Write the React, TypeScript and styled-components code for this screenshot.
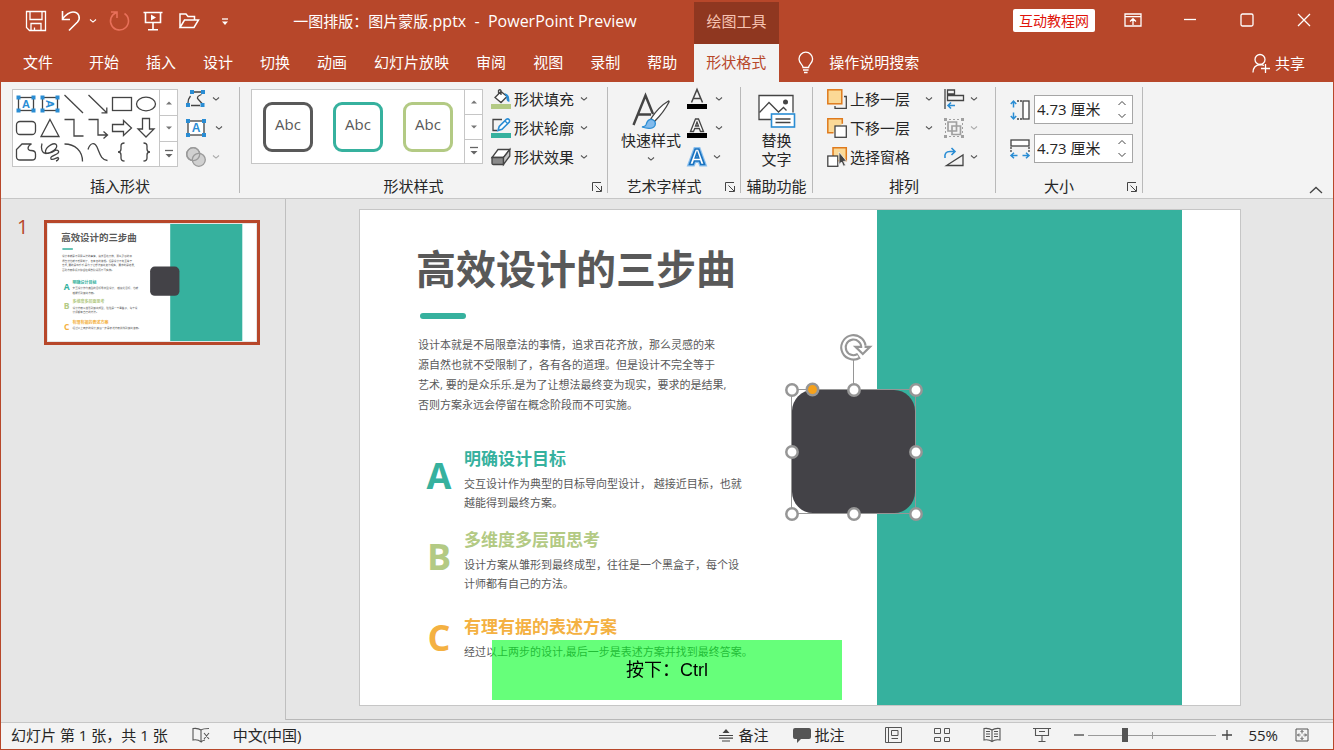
import React from "react";
import styled, { createGlobalStyle, css } from "styled-components";

const color = {
  brand: "#b7472a",
  brandDark: "#8f3720",
  ribbon: "#f3f3f3",
  workspace: "#e6e6e6",
  line: "#c6c6c6",
  ink: "#262626",
  icon: "#444444",
  slideText: "#595959",
  teal: "#36b19e",
  green: "#b3ca84",
  amber: "#f4b142",
  blue: "#2a8dd4",
  shape: "#434247",
  handle: "#969696",
};

const uiFont = `"Open Sans", "Noto Sans CJK SC", sans-serif`;

const GlobalStyle = createGlobalStyle`
  *, *::before, *::after { box-sizing: border-box; }
  body {
    margin: 0;
    font: 15px/20px ${uiFont};
    color: ${color.ink};
    background: ${color.workspace};
  }
  button, input { font: inherit; color: inherit; }
  svg { display: block; flex: none; overflow: visible; }
`;

/* ---------- shell ---------- */

const Window = styled.div`
  display: flex;
  flex-direction: column;
  min-height: 100vh;
  overflow: hidden;
`;

const Header = styled.header`
  background: ${color.brand};
  color: #fff;
`;

const Body = styled.div`
  flex: 1;
  display: flex;
  flex-direction: column;
  border: solid ${color.brand};
  border-width: 0 1px 1px;
`;

const plainButton = css`
  display: flex;
  align-items: center;
  justify-content: center;
  padding: 0;
  border: 0;
  background: none;
  white-space: nowrap;
`;

const TitleRow = styled.div`
  display: flex;
  height: 44px;
  padding-top: 2px;
`;

const QuickAccess = styled.div`
  display: flex;
  align-items: center;
  width: 240px;
  height: 38px;
  padding-left: 25px;
`;

const QuickButton = styled.button<{ $w: number; $gap?: number }>`
  ${plainButton}
  width: ${(p) => p.$w}px;
  height: 28px;
  margin-right: ${(p) => p.$gap ?? 0}px;
`;

const DocTitle = styled.h1`
  width: 454px;
  padding-right: 4px;
  margin: 0;
  font-size: 15px;
  font-weight: 400;
  line-height: 38px;
  text-align: center;
  white-space: pre;
`;

const AppName = styled.span`
  font-size: 16px;
`;

const ContextLabel = styled.div`
  width: 85px;
  background: ${color.brandDark};
  color: #f7c3b2;
  line-height: 38px;
  text-align: center;
`;

const WindowControls = styled.div`
  flex: 1;
  display: flex;
  justify-content: flex-end;
  align-items: center;
  height: 36px;
  padding-right: 2px;
`;

const SiteBadge = styled.a`
  margin-right: 9px;
  padding: 0 6px;
  border-radius: 2px;
  background: #fff;
  color: #e0140a;
  font-size: 14px;
  line-height: 23px;
  text-decoration: none;
`;

const ControlButton = styled.button`
  ${plainButton}
  width: 57px;
  height: 36px;
`;

const TabRow = styled.nav`
  display: flex;
  height: 38px;
  padding-left: 8px;
`;

const Tab = styled.button<{ $active?: boolean; $first?: boolean }>`
  ${plainButton}
  padding: 0 12px 2px 15px;
  ${(p) => p.$first && `margin-right: 9px;`}
  ${(p) =>
    p.$active &&
    `
    margin-left: 5px;
    padding: 0 13px 2px 12px;
    background: ${color.ribbon};
    color: ${color.brand};
  `}
`;

const TellMe = styled.button`
  ${plainButton}
  gap: 14px;
  margin-left: 18px;
  padding-bottom: 2px;
`;

const Share = styled.button`
  ${plainButton}
  gap: 5px;
  margin: 0 29px 0 auto;
`;

/* ---------- ribbon ---------- */

const Ribbon = styled.section`
  display: flex;
  height: 117px;
  padding: 5px 0;
  background: ${color.ribbon};
  border-bottom: 1px solid ${color.line};
`;

const Group = styled.section<{ $w: number }>`
  display: flex;
  flex-direction: column;
  width: ${(p) => p.$w}px;
  border-right: 1px solid #b9b9b9;
`;

const GroupBody = styled.div<{ $pad?: number }>`
  flex: 1;
  display: flex;
  align-items: flex-start;
  padding-left: ${(p) => p.$pad ?? 0}px;
`;

const GroupFooter = styled.footer`
  display: flex;
  align-items: center;
  height: 20px;
  margin-bottom: -3px;
`;

const GroupName = styled.span`
  flex: 1;
  text-align: center;
  white-space: nowrap;
`;

const Launcher = styled.button`
  ${plainButton}
  width: 20px;
  height: 20px;
  padding-top: 2px;
`;

const Gallery = styled.div<{ $h: number }>`
  display: flex;
  height: ${(p) => p.$h}px;
  margin-top: 2px;
  border: 1px solid ${color.line};
  background: #fff;
`;

const ShapeGrid = styled.div`
  display: grid;
  grid-template-columns: repeat(6, 24px);
  grid-auto-rows: 24px;
  padding: 2px 1px;
`;

const ShapeButton = styled.button`
  ${plainButton}
`;

const StyleList = styled.div`
  display: flex;
  align-items: center;
  gap: 20px;
  padding: 0 11px;
`;

const StyleSwatch = styled.button<{ $c: string }>`
  ${plainButton}
  width: 50px;
  height: 50px;
  padding-bottom: 5px;
  border: 3px solid ${(p) => p.$c};
  border-radius: 9px;
  color: ${color.slideText};
  background: #fff;
`;

const Scroller = styled.div`
  display: grid;
  grid-template-rows: repeat(3, 1fr);
  width: 18px;
  border-left: 1px solid ${color.line};
`;

const ScrollButton = styled.button`
  ${plainButton}
  & + & {
    border-top: 1px solid ${color.line};
  }
`;

const CommandColumn = styled.div<{ $left?: number }>`
  display: flex;
  flex-direction: column;
  align-items: flex-start;
  margin-left: ${(p) => p.$left ?? 0}px;
  margin-top: -3px;
`;

const Command = styled.button<{ $gap?: number; $w?: number }>`
  ${plainButton}
  justify-content: flex-start;
  gap: ${(p) => p.$gap ?? 3}px;
  height: 29px;
  ${(p) => p.$w && `width: ${p.$w}px;`}
  & > svg:last-child:not(:first-child) {
    margin-left: auto;
  }
`;

const BigCommand = styled.button<{ $w: number }>`
  ${plainButton}
  flex-direction: column;
  width: ${(p) => p.$w}px;
  padding-top: 6px;
  line-height: 19px;
  & > svg:last-child {
    margin-top: 6px;
  }
`;

const SizeFields = styled.div`
  display: flex;
  flex-direction: column;
  gap: 10px;
  padding-top: 8px;
`;

const SizeField = styled.label`
  display: flex;
  align-items: center;
  gap: 4px;
`;

const Stepper = styled.span`
  display: flex;
  width: 99px;
  height: 29px;
  border: 1px solid #a6a6a6;
  background: #fff;
`;

const StepperInput = styled.input`
  flex: 1;
  min-width: 0;
  padding: 0 0 2px 2px;
  border: 0;
  outline: 0;
  background: none;
`;

const StepperButtons = styled.span`
  display: grid;
  width: 21px;
  padding: 1px 0;
`;

const StepButton = styled.button`
  ${plainButton}
`;

const CollapseButton = styled.button`
  ${plainButton}
  align-self: flex-end;
  width: 30px;
  height: 16px;
  margin-left: auto;
  margin-right: 2px;
  margin-bottom: -5px;
`;

/* ---------- workspace ---------- */

const Workspace = styled.main`
  flex: 1;
  display: flex;
  padding-bottom: 2px;
  background: ${color.workspace};
`;

const SlidePanel = styled.aside`
  display: flex;
  align-items: flex-start;
  width: 285px;
  padding: 21px 0 0 16px;
  border-right: 1px solid #bfbfbf;
`;

const SlideNumber = styled.span`
  width: 27px;
  color: ${color.brand};
  font-size: 20px;
  line-height: 14px;
`;

const ThumbButton = styled.button`
  ${plainButton}
  width: 216px;
  height: 125px;
  border: 3px solid ${color.brand};
  background: ${color.workspace};
`;

const Stage = styled.div`
  flex: 1;
  display: flex;
  justify-content: center;
  align-items: flex-start;
  padding: 10px 19px 13px 0;
  border-bottom: 1px solid #b8b8b8;
`;

const Slide = styled.article`
  position: relative;
  flex: none;
  width: 882px;
  height: 497px;
  padding: 35px 0 0 56px;
  border: 1px solid ${color.line};
  background: #fff;
  color: ${color.slideText};
`;

const SlideTitle = styled.h2`
  margin: 0;
  font-size: 40px;
  line-height: 48px;
  font-weight: 700;
  white-space: nowrap;
`;

const Accent = styled.div`
  width: 46px;
  height: 6px;
  margin: 20px 0 16px 4px;
  border-radius: 3px;
  background: ${color.teal};
`;

const Intro = styled.p`
  margin: 0 0 31px 2px;
  font-size: 11px;
  line-height: 20px;
  white-space: pre-line;
`;

const Points = styled.div`
  display: flex;
  flex-direction: column;
  gap: 15px;
`;

const Point = styled.section<{ $h: number }>`
  display: grid;
  grid-template-columns: 48px 1fr;
  align-items: center;
  height: ${(p) => p.$h}px;
`;

const PointLetter = styled.span<{ $c: string }>`
  align-self: start;
  width: 46px;
  color: ${(p) => p.$c};
  font-size: 36px;
  line-height: 60px;
  font-weight: 700;
  text-align: center;
`;

const PointTitle = styled.h3<{ $c: string }>`
  margin: 0 0 3px;
  color: ${(p) => p.$c};
  font-size: 17px;
  line-height: 24px;
  font-weight: 700;
`;

const PointText = styled.p`
  margin: 0;
  font-size: 11px;
  line-height: 19px;
  white-space: pre-line;
`;

const TealPanel = styled.div`
  position: absolute;
  top: 0;
  bottom: 0;
  left: 517px;
  width: 305px;
  background: ${color.teal};
`;

const Selection = styled.svg`
  position: absolute;
  left: 420px;
  top: 120px;
`;

const KeyHint = styled.div`
  position: fixed;
  left: 50%;
  bottom: 50px;
  width: 350px;
  margin-left: -175px;
  background: rgba(0, 255, 33, 0.6);
  color: #000;
  font: 18px/60px "Liberation Sans", "Noto Sans CJK SC", sans-serif;
  text-align: center;
`;

/* ---------- status bar ---------- */

const StatusBar = styled.footer`
  display: flex;
  align-items: center;
  height: 27px;
  padding: 0 24px 2px 10px;
  border-top: 1px solid ${color.line};
  background: ${color.ribbon};
  white-space: nowrap;
`;

const StatusText = styled.span<{ $left?: number }>`
  margin-left: ${(p) => p.$left ?? 0}px;
`;

const StatusButton = styled.button<{ $left?: number; $gap?: number }>`
  ${plainButton}
  gap: ${(p) => p.$gap ?? 4}px;
  margin-left: ${(p) => p.$left ?? 0}px;
`;

const StatusRight = styled.div`
  display: flex;
  align-items: center;
  margin-left: auto;
`;

const ZoomSlider = styled.input`
  appearance: none;
  width: 128px;
  height: 14px;
  margin: 0 5px 0 3px;
  background:
    linear-gradient(#9a9a9a, #9a9a9a) center / 1px 7px no-repeat,
    linear-gradient(#9a9a9a, #9a9a9a) center / 100% 1px no-repeat;
  &::-webkit-slider-thumb {
    appearance: none;
    width: 6px;
    height: 14px;
    background: #555;
  }
`;

/* ---------- icons ---------- */

type IconProps = { children: React.ReactNode; w?: number; h?: number; c?: string };

const Icon = ({ children, w = 20, h = 20, c = color.icon }: IconProps) => (
  <svg width={w} height={h} viewBox={`0 0 ${w} ${h}`} fill="none" stroke={c} strokeWidth="1.3" aria-hidden="true">
    {children}
  </svg>
);

const Chevron = ({ c = "#555" }: { c?: string }) => (
  <svg width="8" height="6" viewBox="0 0 8 6" fill="none" stroke={c} strokeWidth="1.1" aria-hidden="true">
    <path d="M1 1.500l3 2.600 3-2.600" />
  </svg>
);

const Corners = ({ x1, y1, x2, y2 }: { x1: number; y1: number; x2: number; y2: number }) => (
  <g fill={color.blue} stroke="none">
    {[[x1, y1], [x2, y1], [x1, y2], [x2, y2]].map(([x, y]) => (
      <rect key={`${x}-${y}`} x={x - 2} y={y - 2} width="4" height="4" />
    ))}
  </g>
);

const iconLetter = { fontFamily: "Liberation Sans", fontWeight: 700, textAnchor: "middle" as const, stroke: "none" };

const shapes: [string, React.ReactNode][] = [
  ["文本框", <><rect x="4.500" y="5.500" width="15" height="13" fill="#fff" /><text x="12" y="16" fontSize="11" fill={color.blue} {...iconLetter}>A</text><Corners x1={4.5} y1={5.5} x2={19.5} y2={18.5} /></>],
  ["竖排文本框", <><rect x="4.500" y="5.500" width="15" height="13" fill="#fff" /><text x="12" y="16" fontSize="11" fill={color.blue} transform="rotate(90 12 12)" {...iconLetter}>A</text><Corners x1={4.5} y1={5.5} x2={19.5} y2={18.5} /></>],
  ["直线", <path d="M2.500 3l18.500 18" />],
  ["箭头", <path d="M2.500 3l18 17.500M20.800 15.500v5.300h-5.300" />],
  ["矩形", <rect x="2.500" y="5.500" width="19" height="13" />],
  ["椭圆", <ellipse cx="12" cy="12" rx="9.500" ry="6.800" />],
  ["圆角矩形", <rect x="2.500" y="5.500" width="19" height="13" rx="3.500" />],
  ["三角形", <path d="M12 3.500l9 17H3z" />],
  ["肘形连接符", <path d="M2.500 3.500H12V20h9.500" />],
  ["肘形箭头", <path d="M2.500 3.500H12v15.500h9M17.500 15.500l4 3.500-4 3.500" />],
  ["右箭头", <path d="M2.500 8.500H13.500V4.500L21.500 12l-8 7.500v-4h-11z" />],
  ["下箭头", <path d="M8.500 2.500h7v10.500h4.500l-8 8-8-8h4.500z" />],
  ["任意多边形", <path d="M8 4h9.500c-4.500 2-4.500 6.500-.5 6.500 3 0 4.500 1 4.500 3.500v3c0 2-1.500 3-3.500 3H6c-2 0-3.500-1-3.500-3V9.500z" />],
  ["自由曲线", <path d="M4 3.500c-1.500 5 0 10 4 10 5 0 12-5 10.500-8.500C17 1.500 8.500 6 7.500 11c-.8 4.500 7 1.500 9.500-.5 3-1 5 1 2.500 3-3 2-8 3-6.500 5.500 1.500 1.500 6-1.500 7-1.500 1.500 1 0 3-2 3.500" />],
  ["弧形", <path d="M2.500 4C13 4 20.500 11 20.500 21.500" />],
  ["曲线", <path d="M2 9.500C4 3 8.500 1.500 11 7c3 7 4 13 10.500 13.500" />],
  ["左大括号", <path d="M14.500 3c-3 0-3.500 1-3.500 3v3c0 2-.5 3-3 3 2.500 0 3 1 3 3v3c0 2 .5 3 3.500 3" />],
  ["右大括号", <path d="M9.500 3c3 0 3.500 1 3.500 3v3c0 2 .5 3 3 3-2.500 0-3 1-3 3v3c0 2-.5 3-3.500 3" />],
];

const GalleryScroller = () => (
  <Scroller>
    <ScrollButton aria-label="上一行"><Icon w={8} h={6} c="none"><path d="M1 4.500h6L4 1.500z" fill="#777" /></Icon></ScrollButton>
    <ScrollButton aria-label="下一行"><Icon w={8} h={6} c="none"><path d="M1 1.500h6L4 4.500z" fill="#777" /></Icon></ScrollButton>
    <ScrollButton aria-label="更多"><Icon w={10} h={10} c="#666"><path d="M1 1.500h8" /><path d="M1.500 5h7L5 8.500z" fill="#666" stroke="none" /></Icon></ScrollButton>
  </Scroller>
);

const EditPointsIcon = () => (
  <Icon><path d="M8 3h7M4.500 7Q2 10 2 14M5 16.500h9M15.500 5.500Q11 7 11.500 9.500l4.500 5" /><g fill={color.blue} stroke="none"><rect x="4" y="1" width="4" height="4" /><rect x="15" y="1" width="4" height="4" /><rect x="0" y="14" width="4" height="4" /><rect x="14.500" y="14" width="4" height="4" /></g></Icon>
);
const TextBoxIcon = () => (
  <Icon><rect x="2" y="3" width="16" height="14" fill="#fff" /><text x="10" y="14" fontSize="12" fill={color.blue} {...iconLetter}>A</text><Corners x1={2} y1={3} x2={18} y2={17} /></Icon>
);
const MergeIcon = () => (
  <Icon c="#9a9a9a"><circle cx="7.200" cy="7.200" r="6.500" fill="#d0d0d0" /><circle cx="12.800" cy="12.800" r="6.500" fill="#d0d0d0" /><circle cx="7.200" cy="7.200" r="6.500" /></Icon>
);
const FillIcon = () => (
  <Icon><rect x="0" y="15" width="20" height="5" fill={color.green} stroke="none" /><path d="M10 2.500l6 5-6 6-6-5zM7.500 5V1.500q1.500-1.500 2.500 0V6" fill="#fff" /><path d="M14.500 5q3.500 1 3.300 7-2-.5-1.800-4z" fill={color.blue} stroke={color.blue} /></Icon>
);
const OutlineIcon = () => (
  <Icon><rect x="0" y="15" width="20" height="5" fill={color.teal} stroke="none" /><path d="M11 1.500H2V12.500h4" /><path d="M7 12.500l1.200-4L15.500 1.200q1.500-.8 2.500.3t.3 2.500L11 11.300z" fill="#fff" stroke={color.blue} strokeWidth="1.600" /><path d="M14 3l2.800 2.800" stroke={color.blue} /></Icon>
);
const EffectsIcon = () => (
  <Icon><path d="M7 2.500H18.800L12.500 10.500H1z" fill="#fff" /><path d="M1 10.500h11.500v7H2.500Q1 17.500 1 16z" fill="#8a8a8a" /><path d="M12.500 10.500L18.800 2.500V9L12.500 17.500z" fill="#c4c4c4" /></Icon>
);
const QuickStyleIcon = () => (
  <Icon w={38} h={38}><path d="M1.500 32L13.500 2.500 21 21M6 21.500h13" strokeWidth="2.400" /><path d="M19 25.500q8-12 17.500-17.500.8 0 .5 1-5 10-14.500 19.500z" fill="#fff" /><path d="M10 34q4-.5 4.500-3.500 1.500-4.500 5.500-4 4.500 1.500 3 6-3 5-13 1.500z" fill="#83bbec" stroke={color.blue} /></Icon>
);
const TextFillIcon = () => (
  <Icon><path d="M4.500 13.500L10 .5l5.500 13M6.500 9.500h7" strokeWidth="1.500" /><rect x="0" y="15" width="20" height="5" fill="#000" stroke="none" /></Icon>
);
const TextOutlineIcon = () => (
  <Icon><path d="M3.500 13.500L8.500 1h3l5 12.500h-3l-1.200-3H7.700l-1.200 3zM8.500 8h3L10 4z" fill="#fff" /><rect x="0" y="15" width="20" height="5" fill="#000" stroke="none" /></Icon>
);
const TextEffectIcon = () => (
  <Icon><path d="M2.500 17.500L8.200 2h3.600l5.700 15.500h-3.700l-1.200-3.500H7.400l-1.200 3.500zM8.300 11h3.400L10 6z" fill="#8cc0ee" stroke="#8cc0ee" strokeWidth="4" /><path d="M2.500 17.500L8.200 2h3.600l5.700 15.500h-3.700l-1.200-3.500H7.400l-1.200 3.500zM8.300 11h3.400L10 6z" fill="#fff" stroke="#1a73c0" strokeWidth="1.700" /></Icon>
);
const AltTextIcon = () => (
  <Icon w={40} h={38}><path d="M14 26.500H2V2.500h34v17" fill="#fff" /><path d="M2.500 19.500l9.500-10L21.500 19l5-4.500 3 3" /><circle cx="28.500" cy="9" r="2.500" fill={color.icon} stroke="none" /><rect x="14.500" y="21" width="23" height="13" fill="#fff" stroke={color.blue} strokeWidth="1.600" /><path d="M18.500 26h15M18.500 29.500h15" /></Icon>
);
const ForwardIcon = () => (
  <Icon><path d="M17 7.500h2.300V19.300H8V17" /><rect x=".8" y=".8" width="14" height="14" fill="#fbd996" stroke="#df7a1c" strokeWidth="1.500" /></Icon>
);
const BackwardIcon = () => (
  <Icon><path d="M6.500 14.800H.8V.8h14.500v5" fill="#fbd996" stroke="#df7a1c" strokeWidth="1.500" /><rect x="8" y="8" width="11.300" height="11.300" fill="#fff" /></Icon>
);
const PaneIcon = () => (
  <Icon><path d="M6 .8h13.300v13H6z" fill="#fbd996" stroke="#df7a1c" strokeWidth="1.500" /><rect x=".8" y="9" width="10" height="10.300" fill="#fff" /><path d="M12 5v12.500l2.500-2.500 2 4.300 2-1-2-4h3.200z" fill={color.icon} stroke="#f3f3f3" strokeWidth=".8" /></Icon>
);
const AlignIcon = () => (
  <Icon><path d="M1 0v20M3.500 1h7v4h-7zM3.500 6.500h16v5h-16z" /><path d="M11 16.500H4M7 13.500l-3 3 3 3" stroke={color.blue} strokeWidth="1.600" /></Icon>
);
const GroupIcon = () => (
  <Icon c="#a0a0a0"><path d="M4 4h8.500v9H4zM8 8h8.500v8.500H8z" strokeWidth="1.700" /><g fill="#a0a0a0" stroke="none"><rect width="3" height="3" /><rect x="17" width="3" height="3" /><rect y="17" width="3" height="3" /><rect x="17" y="17" width="3" height="3" /></g><path d="M5 1.500h10M5 18.500h10M1.500 5v10M18.500 5v10" strokeWidth="1" strokeDasharray="2 2" /></Icon>
);
const RotateIcon = () => (
  <Icon><path d="M1 11Q0 4.500 6 4.500h4.500M7.500 1L11 4.500 7.500 8" stroke={color.blue} strokeWidth="1.600" /><path d="M2.500 18.500H19V8z" /></Icon>
);
const HeightIcon = () => (
  <Icon><path d="M3.500 1.500v6M.8 4l2.700-3 2.700 3M3.500 18.500v-6M.8 16l2.700 3 2.700-3" stroke={color.blue} strokeWidth="1.500" /><path d="M7 1h5M7 19h5" strokeDasharray="2 1" /><rect x="13" y="1" width="6" height="18" fill="#fff" /></Icon>
);
const WidthIcon = () => (
  <Icon><rect x="1" y="1" width="18" height="6" fill="#fff" /><path d="M1 8v5M19 8v5" strokeDasharray="2 1" /><path d="M1.500 16.500h6M4 13.800l-3 2.700 3 2.700M18.500 16.500h-6M16 13.800l3 2.700-3 2.700" stroke={color.blue} strokeWidth="1.500" /></Icon>
);
const LauncherIcon = () => (
  <Icon w={10} h={10}><path d="M.5 9V.5H9M3.500 3.500L9 9M9.500 4v5.500H4" strokeWidth="1" /></Icon>
);

/* ---------- slide content ---------- */

const intro = [
  "设计本就是不局限章法的事情，追求百花齐放，那么灵感的来",
  "源自然也就不受限制了，各有各的道理。但是设计不完全等于",
  "艺术, 要的是众乐乐.是为了让想法最终变为现实，要求的是结果,",
  "否则方案永远会停留在概念阶段而不可实施。",
];

const points = [
  { letter: "A", c: color.teal, title: "明确设计目标", lines: ["交互设计作为典型的目标导向型设计， 越接近目标，也就", "越能得到最终方案。"], y: 248, h: 66 },
  { letter: "B", c: color.green, title: "多维度多层面思考", lines: ["设计方案从雏形到最终成型，往往是一个黑盒子，每个设", "计师都有自己的方法。"], y: 329, h: 66 },
  { letter: "C", c: color.amber, title: "有理有据的表述方案", lines: ["经过以上两步的设计,最后一步是表述方案并找到最终答案。"], y: 416, h: 58 },
];

const Thumbnail = () => (
  <svg width="208" height="117" viewBox="0 0 880 495" fontFamily={uiFont} fill={color.slideText} aria-label="幻灯片 1">
    <rect width="880" height="495" fill="#fff" />
    <text x="56" y="74" fontSize="40" fontWeight="700">高效设计的三步曲</text>
    <rect x="60" y="103" width="46" height="6" rx="3" fill={color.teal} />
    {intro.map((line, i) => <text key={line} x="59" y={139 + i * 20} fontSize="11">{line}</text>)}
    {points.map((p) => (
      <g key={p.letter}>
        <text x="79" y={p.y + 31} fontSize="36" fontWeight="700" textAnchor="middle" fill={p.c}>{p.letter}</text>
        <text x="104" y={p.y + 6} fontSize="17" fontWeight="700" fill={p.c}>{p.title}</text>
        {p.lines.map((line, i) => <text key={line} x="104" y={p.y + 29 + i * 19} fontSize="11">{line}</text>)}
      </g>
    ))}
    <rect x="517" width="305" height="495" fill={color.teal} />
    <rect x="432" y="180" width="124" height="124" rx="20" fill={color.shape} />
  </svg>
);

const handles = [[12, 60], [74, 60], [136, 60], [12, 122], [136, 122], [12, 184], [74, 184], [136, 184]];

const SelectedShape = () => (
  <Selection width="150" height="200" viewBox="0 0 150 200" fill="none" aria-label="圆角矩形">
    <rect x="12" y="60" width="123" height="123" rx="21" fill={color.shape} />
    <path d="M73.500 30v30M11.500 59.500h124v124h-124z" stroke={color.handle} />
    <g stroke={color.handle} strokeWidth="2.500" fill="#fff">
      {handles.map(([x, y]) => <circle key={`${x}-${y}`} cx={x} cy={y} r="5.700" />)}
      <circle cx="32.500" cy="59.500" r="5.700" fill="#f5a11c" />
    </g>
    <path d="M79 25.700A10 10 0 1 1 83.400 16" stroke={color.handle} strokeWidth="6.500" />
    <path d="M75.500 16.800h14.500L82.800 24z" fill="#fff" stroke={color.handle} strokeWidth="2.200" />
    <path d="M78 26.200A10 10 0 1 1 83.400 18" stroke="#fff" strokeWidth="2.300" />
  </Selection>
);

const tabs = ["开始", "插入", "设计", "切换", "动画", "幻灯片放映", "审阅", "视图", "录制", "帮助"];

export default function App() {
  return (
    <Window>
      <GlobalStyle />
      <Header>
        <TitleRow>
          <QuickAccess>
            <QuickButton $w={22} $gap={14} aria-label="保存">
              <Icon w={22} h={22} c="#fff"><path d="M1.500 1.500h19v19H4.500l-3-3zM5 1.500v8h12v-8M6 20.500v-7h10v7M9.500 20.500v-3" /></Icon>
            </QuickButton>
            <QuickButton $w={20} $gap={8} aria-label="撤消">
              <Icon w={20} h={22} c="#fff"><path d="M1.500 1v8.500H9M1.500 9Q7 2 12 2c6 0 8 6 4.500 10L8 20.500" strokeWidth="1.600" /></Icon>
            </QuickButton>
            <QuickButton $w={8} $gap={11} aria-label="撤消选项"><Chevron c="#fff" /></QuickButton>
            <QuickButton $w={22} $gap={13} aria-label="重复">
              <Icon w={22} h={22} c="#e8705a"><path d="M3 2h6v6M8.500 2.500a9 9 0 1 0 8 1" strokeWidth="1.600" /></Icon>
            </QuickButton>
            <QuickButton $w={20} $gap={15} aria-label="从头开始">
              <Icon w={20} h={22} c="#fff"><path d="M.5 2.500h19M2.500 2.500v10h15v-10M10 12.500v7M5 19.800h10" strokeWidth="1.600" /><path d="M8 4.500l5 3-5 3z" fill="#fff" stroke="none" /></Icon>
            </QuickButton>
            <QuickButton $w={22} $gap={20} aria-label="打开">
              <Icon w={22} h={20} c="#fff"><path d="M2 16.500V3h6l2 2.500h6.500V9M2 16.500L6.500 9H20.500L16 16.500z" strokeWidth="1.500" /></Icon>
            </QuickButton>
            <QuickButton $w={10} aria-label="自定义快速访问工具栏">
              <Icon w={8} h={6} c="#fff"><path d="M1 1h6" /><path d="M1 3.500h6L4 7z" fill="#fff" stroke="none" /></Icon>
            </QuickButton>
          </QuickAccess>
          <DocTitle>一图排版：图片蒙版<AppName>{".pptx  -  PowerPoint Preview"}</AppName></DocTitle>
          <ContextLabel>绘图工具</ContextLabel>
          <WindowControls>
            <SiteBadge href="#">互动教程网</SiteBadge>
            <ControlButton aria-label="功能区显示选项">
              <Icon w={18} h={14} c="#fff"><path d="M1 1h16v12H1zM1 3.700h16M9 12V6M6 8.500L9 5.700l3 2.800" /></Icon>
            </ControlButton>
            <ControlButton aria-label="最小化"><Icon w={14} h={14} c="#fff"><path d="M1 6.500h12" /></Icon></ControlButton>
            <ControlButton aria-label="最大化"><Icon w={14} h={14} c="#fff"><rect x="1" y="1" width="12" height="12" rx="1.500" /></Icon></ControlButton>
            <ControlButton aria-label="关闭"><Icon w={14} h={14} c="#fff"><path d="M1 1l12 12M13 1L1 13" /></Icon></ControlButton>
          </WindowControls>
        </TitleRow>
        <TabRow>
          <Tab $first>文件</Tab>
          {tabs.map((t) => <Tab key={t}>{t}</Tab>)}
          <Tab $active>形状格式</Tab>
          <TellMe>
            <Icon w={18} h={20} c="#fff"><path d="M6 15.500c0-3-4-4-4-8.500a6.800 6.800 0 0 1 13.600 0c0 4.500-4 5.500-4 8.500zM6 18h5.600M7 20.500h3.600" /></Icon>
            操作说明搜索
          </TellMe>
          <Share>
            <Icon w={18} h={20} c="#fff"><circle cx="8" cy="6.500" r="5" /><path d="M1 19.500q0-7 7-8 2 0 4 1M13.500 11v9M9 15.500h9" /></Icon>
            共享
          </Share>
        </TabRow>
      </Header>

      <Body>
        <Ribbon>
          <Group $w={239}>
            <GroupBody $pad={11}>
              <Gallery $h={78}>
                <ShapeGrid>
                  {shapes.map(([name, art]) => (
                    <ShapeButton key={name} aria-label={name}><Icon w={24} h={24}>{art}</Icon></ShapeButton>
                  ))}
                </ShapeGrid>
                <GalleryScroller />
              </Gallery>
              <CommandColumn $left={8}>
                <Command $gap={6} aria-label="编辑形状"><EditPointsIcon /><Chevron /></Command>
                <Command $gap={9} aria-label="绘制文本框"><TextBoxIcon /><Chevron /></Command>
                <Command $gap={6} aria-label="合并形状"><MergeIcon /><Chevron c="#aaa" /></Command>
              </CommandColumn>
            </GroupBody>
            <GroupFooter><GroupName>插入形状</GroupName></GroupFooter>
          </Group>

          <Group $w={368}>
            <GroupBody $pad={11}>
              <Gallery $h={75}>
                <StyleList>
                  {[color.slideText, color.teal, color.green].map((c) => <StyleSwatch key={c} $c={c}>Abc</StyleSwatch>)}
                </StyleList>
                <GalleryScroller />
              </Gallery>
              <CommandColumn $left={8}>
                <Command $w={97}><FillIcon />形状填充<Chevron /></Command>
                <Command $w={97}><OutlineIcon />形状轮廓<Chevron /></Command>
                <Command $w={97}><EffectsIcon />形状效果<Chevron /></Command>
              </CommandColumn>
            </GroupBody>
            <GroupFooter>
              <GroupName>形状样式</GroupName>
              <Launcher aria-label="设置形状格式"><LauncherIcon /></Launcher>
            </GroupFooter>
          </Group>

          <Group $w={133}>
            <GroupBody $pad={7}>
              <BigCommand $w={72}><QuickStyleIcon />快速样式<Chevron /></BigCommand>
              <CommandColumn>
                <Command $w={36} aria-label="文本填充"><TextFillIcon /><Chevron /></Command>
                <Command $w={36} aria-label="文本轮廓"><TextOutlineIcon /><Chevron /></Command>
                <Command $w={34} aria-label="文本效果"><TextEffectIcon /><Chevron /></Command>
              </CommandColumn>
            </GroupBody>
            <GroupFooter>
              <GroupName>艺术字样式</GroupName>
              <Launcher aria-label="设置文本效果格式"><LauncherIcon /></Launcher>
            </GroupFooter>
          </Group>

          <Group $w={72}>
            <GroupBody>
              <BigCommand $w={72}><AltTextIcon /><span>替换<br />文字</span></BigCommand>
            </GroupBody>
            <GroupFooter><GroupName>辅助功能</GroupName></GroupFooter>
          </Group>

          <Group $w={183}>
            <GroupBody $pad={14}>
              <CommandColumn>
                <Command $w={106}><ForwardIcon />上移一层<Chevron /></Command>
                <Command $w={106}><BackwardIcon />下移一层<Chevron /></Command>
                <Command><PaneIcon />选择窗格</Command>
              </CommandColumn>
              <CommandColumn $left={11}>
                <Command $w={34} aria-label="对齐"><AlignIcon /><Chevron /></Command>
                <Command $w={34} aria-label="组合"><GroupIcon /><Chevron c="#aaa" /></Command>
                <Command $w={34} aria-label="旋转"><RotateIcon /><Chevron /></Command>
              </CommandColumn>
            </GroupBody>
            <GroupFooter><GroupName>排列</GroupName></GroupFooter>
          </Group>

          <Group $w={147}>
            <GroupBody $pad={14}>
              <SizeFields>
                {[["高度", <HeightIcon />], ["宽度", <WidthIcon />]].map(([name, art]) => (
                  <SizeField key={name as string}>
                    {art}
                    <Stepper>
                      <StepperInput type="text" defaultValue="4.73 厘米" aria-label={name as string} />
                      <StepperButtons>
                        <StepButton aria-label="增大"><Icon w={8} h={6}><path d="M.5 5L4 1.500 7.500 5" strokeWidth="1" /></Icon></StepButton>
                        <StepButton aria-label="减小"><Icon w={8} h={6}><path d="M.5 1L4 4.500 7.500 1" strokeWidth="1" /></Icon></StepButton>
                      </StepperButtons>
                    </Stepper>
                  </SizeField>
                ))}
              </SizeFields>
            </GroupBody>
            <GroupFooter>
              <GroupName>大小</GroupName>
              <Launcher aria-label="大小和位置"><LauncherIcon /></Launcher>
            </GroupFooter>
          </Group>

          <CollapseButton aria-label="折叠功能区">
            <Icon w={14} h={8}><path d="M1 7l6-5.500L13 7" /></Icon>
          </CollapseButton>
        </Ribbon>

        <Workspace>
          <SlidePanel>
            <SlideNumber>1</SlideNumber>
            <ThumbButton><Thumbnail /></ThumbButton>
          </SlidePanel>
          <Stage>
            <Slide>
              <SlideTitle>高效设计的三步曲</SlideTitle>
              <Accent />
              <Intro>{intro.join("\n")}</Intro>
              <Points>
                {points.map((p) => (
                  <Point key={p.letter} $h={p.h}>
                    <PointLetter $c={p.c}>{p.letter}</PointLetter>
                    <div>
                      <PointTitle $c={p.c}>{p.title}</PointTitle>
                      <PointText>{p.lines.join("\n")}</PointText>
                    </div>
                  </Point>
                ))}
              </Points>
              <TealPanel />
              <SelectedShape />
            </Slide>
          </Stage>
        </Workspace>

        <StatusBar>
          <StatusText>幻灯片 第 1 张，共 1 张</StatusText>
          <StatusButton $left={24} aria-label="拼写检查">
            <Icon w={18} h={16} c="#555"><path d="M9 3Q6 .8 1 1.500v11.500q5-.8 8 1.800V3q2-1.500 8-1.500M9 14.800q2-1.500 4-1.800M12 6l5 6M17 6l-5 6" strokeWidth="1.100" /></Icon>
          </StatusButton>
          <StatusText $left={23}>中文(中国)</StatusText>
          <StatusRight>
            <StatusButton $gap={5}>
              <Icon w={14} h={14} c="#444"><path d="M3.500 5h7L7 1z" fill="#444" stroke="none" /><path d="M0 7.500h14M0 10.200h14M3 13h8" strokeWidth="1.200" /></Icon>
              备注
            </StatusButton>
            <StatusButton $left={25} $gap={3}>
              <Icon w={18} h={16} c="none"><path d="M2 1h14q2 0 2 2v7q0 2-2 2H8l-4 4v-4H2q-2 0-2-2V3q0-2 2-2z" fill="#555" /></Icon>
              批注
            </StatusButton>
            <StatusButton $left={40} aria-label="普通视图"><Icon w={18} h={16} c="#555"><path d="M1.500.5h16v15H1.500zM4.500.5v15M7.500 3.500h6.500v5H7.500zM7.500 11.500h6.500" strokeWidth="1" /></Icon></StatusButton>
            <StatusButton $left={31} aria-label="幻灯片浏览"><Icon w={18} h={16} c="#555"><path d="M1.500 1.500h6v5H1.500zM11.500 1.500h5v5H11.500zM1.500 10.500h6v4H1.500zM11.500 10.500h5v4H11.500z" strokeWidth="1" /></Icon></StatusButton>
            <StatusButton $left={32} aria-label="阅读视图"><Icon w={18} h={16} c="#555"><path d="M9 3Q6 .8 1 1.500v11.500q5-.8 8 1.500 3-2.300 8-1.500V1.500Q12 .8 9 3v12M3 4.500h4M3 7h4M3 9.500h4M11 4.500h4M11 7h4M11 9.500h4" strokeWidth="1.100" /></Icon></StatusButton>
            <StatusButton $left={32} aria-label="幻灯片放映"><Icon w={18} h={16} c="#555"><path d="M0 1.500h18M2.500 1.500v7h13V1.500M6 4.500h6M9 8.500v6M5.500 14.500h7" strokeWidth="1.100" /></Icon></StatusButton>
            <StatusButton $left={22} aria-label="缩小"><Icon w={12} h={12} c="#444"><path d="M1 6h10" /></Icon></StatusButton>
            <ZoomSlider type="range" min={0} max={200} defaultValue={55} aria-label="缩放" />
            <StatusButton aria-label="放大"><Icon w={12} h={12} c="#444"><path d="M1 6h10M6 1v10" /></Icon></StatusButton>
            <StatusButton $left={15}>55%</StatusButton>
            <StatusButton $left={17} aria-label="适应窗口"><Icon w={14} h={14} c="#555"><path d="M1 1h12v12H1z" strokeWidth="1" /><path d="M7 2.500v3M7 8.500v3M2.500 7h3M8.500 7h3M5.500 4L7 2.500 8.500 4M5.500 10L7 11.500 8.500 10M4 5.500L2.500 7 4 8.500M10 5.500L11.500 7 10 8.500" strokeWidth=".9" /></Icon></StatusButton>
          </StatusRight>
        </StatusBar>
      </Body>
      <KeyHint>按下：Ctrl</KeyHint>
    </Window>
  );
}
